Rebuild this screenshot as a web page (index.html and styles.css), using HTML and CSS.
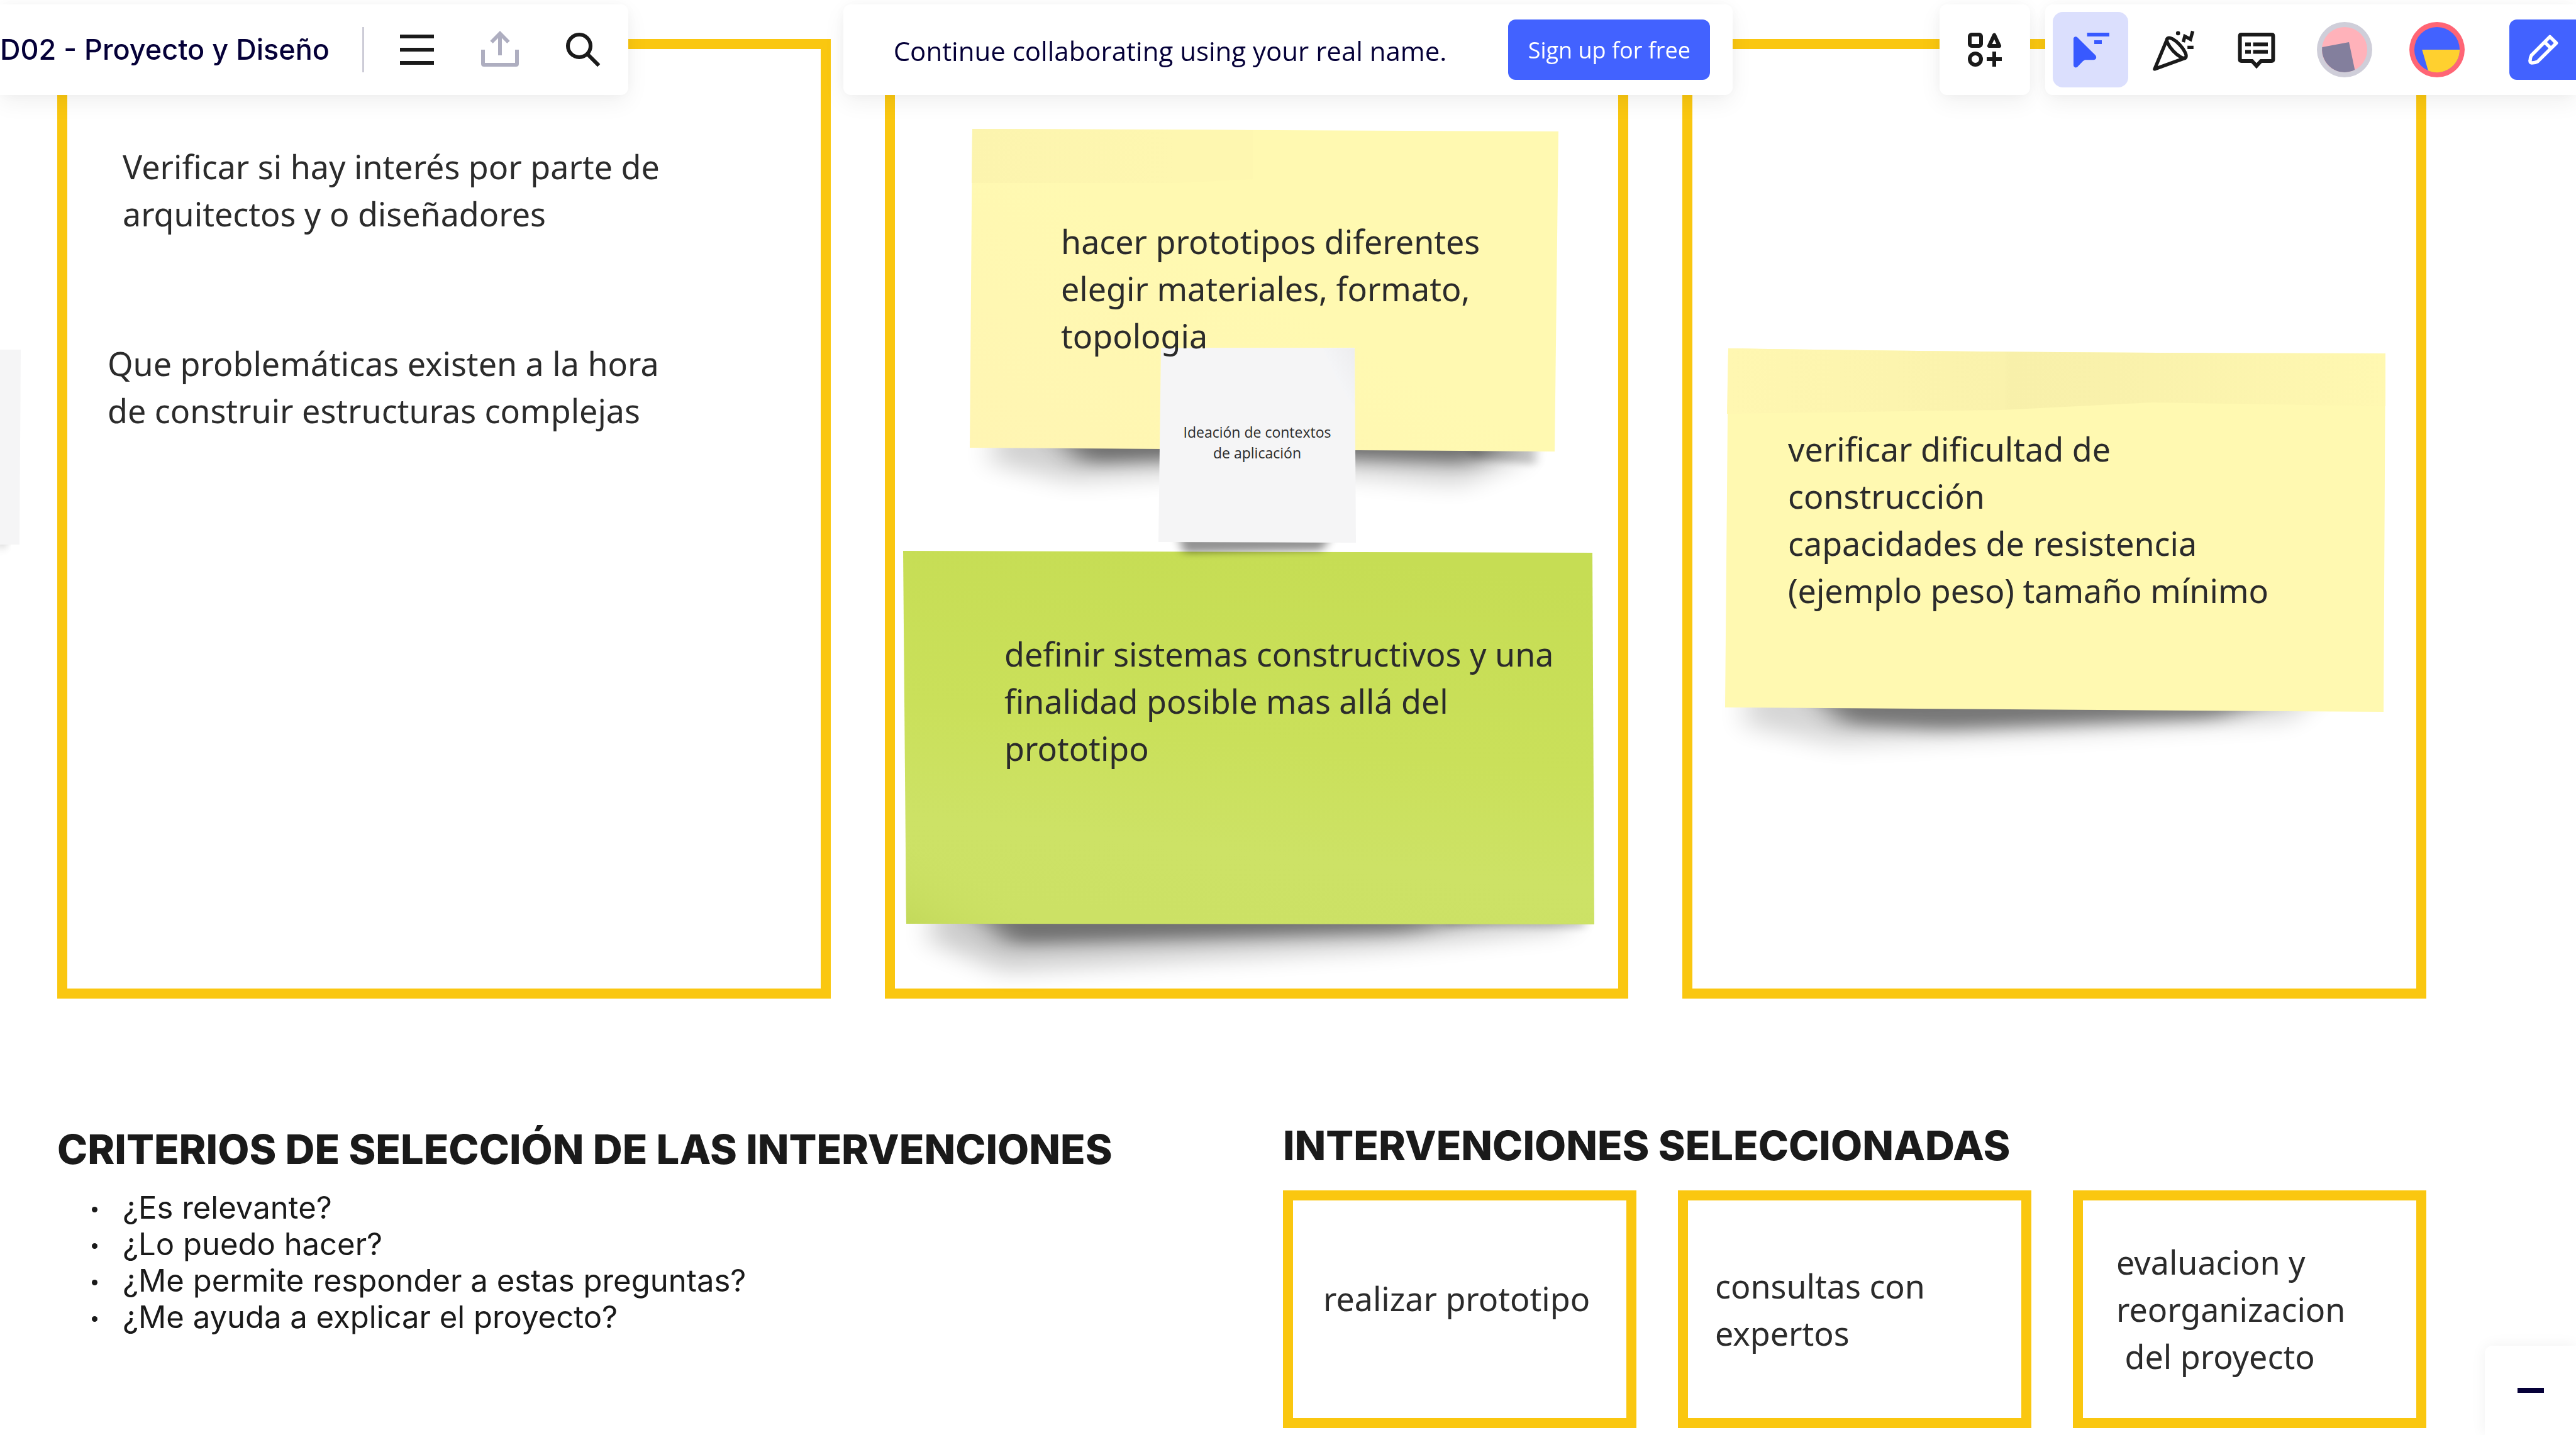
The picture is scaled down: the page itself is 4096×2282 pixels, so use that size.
FILE: index.html
```html
<!DOCTYPE html>
<html lang="es">
<head>
<meta charset="utf-8">
<title>D02 - Proyecto y Diseño</title>
<link rel="stylesheet" href="styles.css">
</head>
<body>
<header class="topbar">
  <nav class="panel panel-left" aria-label="Tablero">
    <span class="board-title">D02 - Proyecto y Diseño</span>
    <span class="divider"></span>
    <button class="tool" type="button" aria-label="Menú"><svg class="icon" viewBox="0 0 24 24"><path d="M3 4h18v2H3zM3 11h18v2H3zM3 18h18v2H3z" fill="#1a1a1a"/></svg></button>
    <button class="tool" type="button" aria-label="Exportar"><svg class="icon" viewBox="0 0 24 24" fill="none" stroke="#aeaec0" stroke-width="2"><path d="M3 12v7.500q0 .5 .5 .5h17q.5 0 .5-.5V12M12 15V3.500M7.500 8L12 3.400 16.500 8"/></svg></button>
    <button class="tool" type="button" aria-label="Buscar"><svg class="icon" viewBox="0 0 24 24" fill="none" stroke="#1a1a1a" stroke-width="2"><circle cx="10" cy="10" r="6"/><path d="M14.300 14.300L20.400 20.400"/></svg></button>
  </nav>
  <section class="panel panel-center" aria-label="Registro">
    <p class="invite">Continue collaborating using your real name.</p>
    <button class="signup" type="button">Sign up for free</button>
  </section>
  <div class="right-group">
    <div class="panel panel-apps">
      <button class="tool" type="button" aria-label="Aplicaciones"><svg class="icon" viewBox="0 0 24 24" fill="none" stroke="#1a1a1a" stroke-width="2"><rect x="4" y="4" width="6" height="6" rx="1"/><path d="M17 4.200L14.300 10h5.400z" stroke-linejoin="round"/><circle cx="7" cy="17" r="3"/><path d="M17 13v8M13 17h8"/></svg></button>
    </div>
    <div class="panel panel-right">
      <button class="tool tool-active" type="button" aria-label="Cursores"><svg class="icon" viewBox="0 0 24 24" fill="#3859ff"><path d="M3 6.200C3 5.100 4.200 4.700 5 5.400L14.600 14.900C15.500 15.900 15 17.400 13.600 17.400H9.700C9 17.400 8.500 17.600 8 18.100L5.200 21C4.400 21.900 3 21.500 3 20.200zM10.200 3H22v2H10.200zM14 7h4v2h-4z"/></svg></button>
      <button class="tool" type="button" aria-label="Reacciones"><svg class="icon" viewBox="0 0 24 24" fill="none" stroke="#1a1a1a" stroke-width="1.800"><path d="M8.800 6L2 22.300 18.500 16.300" stroke-linejoin="round"/><ellipse cx="13.600" cy="11.100" rx="7" ry="2.400" transform="rotate(47 13.600 11.100)"/><path d="M17.200 8l.8-3.100 3 1.600 1.200-4.300M19.400 10.800h3.200"/><circle cx="14.400" cy="3.300" r="1.100" fill="#1a1a1a" stroke="none"/></svg></button>
      <button class="tool" type="button" aria-label="Comentarios"><svg class="icon" viewBox="0 0 24 24" fill="none" stroke="#1a1a1a" stroke-width="2"><path d="M4 4h16q.8 0 .8 .8v12.400q0 .8-.8 .8h-5.600L12 20.600 9.600 18H4q-.8 0-.8-.8V4.800Q3.200 4 4 4z"/><path d="M6 9.200h3M10.200 9.200H18M6 13.200h3M10.200 13.200H18"/></svg></button>
      <div class="avatars">
        <button class="avatar" type="button" aria-label="Invitado"><svg viewBox="0 0 100 100"><circle cx="50" cy="50" r="50" fill="#cfced9"/><circle cx="50" cy="50" r="41" fill="#ffb2ba"/><path d="M9.500 45.500L58 36.500 68.500 86.500A41 41 0 0 1 9.500 45.500z" fill="#837f9d"/></svg></button>
        <button class="avatar" type="button" aria-label="Tú"><svg viewBox="0 0 100 100"><circle cx="50" cy="50" r="50" fill="#ff6575"/><circle cx="50" cy="50" r="41" fill="#4262ff"/><path d="M23 50H91A41 41 0 0 1 34 87.800z" fill="#ffd02f"/></svg></button>
      </div>
      <button class="share" type="button" aria-label="Compartir"><svg class="pencil" viewBox="0 0 16 16" fill="none" stroke="#fff" stroke-width="1.800" stroke-linejoin="round"><path d="M11.500 1.100L14.900 4.500 5 14.300Q3.800 15 1.800 15 .9 15 1 13.800 1 12.200 1.700 11z"/><path d="M8.700 4l3.300 3.200"/></svg></button>
    </div>
  </div>
</header>

<main class="board">
  <div class="frames">
    <section class="frame">
      <p class="text idea-a">Verificar si hay interés por parte de<br>arquitectos y o diseñadores</p>
      <p class="text idea-b">Que problemáticas existen a la hora<br>de construir estructuras complejas</p>
    </section>

    <section class="frame">
      <article class="note note-prototype">
        <svg class="paper" viewBox="0 0 936 513" aria-hidden="true">
          <defs>
            <linearGradient id="fold" x1="0" x2="1" y1="0" y2="0"><stop offset="0" stop-color="#fcf4ae"/><stop offset="1" stop-color="#fef7b0"/></linearGradient>
            <linearGradient id="warm" x1="0" x2="1" y1="1" y2="0"><stop offset="0" stop-color="#fff5b3"/><stop offset=".5" stop-color="#fff9b1"/></linearGradient>
            <filter id="soft" x="-20%" y="-80%" width="140%" height="260%"><feGaussianBlur stdDeviation="22 18"/></filter>
            <filter id="tight" x="-20%" y="-80%" width="140%" height="260%"><feGaussianBlur stdDeviation="24 12"/></filter>
            <filter id="edge" x="-20%" y="-80%" width="140%" height="260%"><feGaussianBlur stdDeviation="8 6"/></filter>
          </defs>
          <path d="M50 470H880V525L780 565 480 540 160 560 30 530z" fill="#000" opacity=".18" filter="url(#soft)"/>
          <path d="M130 480H860L800 532 480 520 180 532z" fill="#000" opacity=".46" filter="url(#tight)"/>
          <path d="M780 490H900V534L800 524z" fill="#000" opacity=".2" filter="url(#edge)"/>
          <path d="M4 0L936 4 930 513 0 507z" fill="url(#warm)"/>
          <path d="M4 0L330 1V86H3z" fill="url(#fold)"/>
          <path d="M330 1L450 2V80L330 86z" fill="#fef7b0"/>
        </svg>
        <p class="text">hacer prototipos diferentes<br>elegir materiales, formato,<br>topologia</p>
      </article>

      <article class="note note-systems">
        <svg class="paper" viewBox="0 0 1099 594" aria-hidden="true">
          <defs>
            <linearGradient id="lime" x1=".6" x2=".4" y1="0" y2="1"><stop offset="0" stop-color="#c6dd54"/><stop offset=".5" stop-color="#cae05a"/><stop offset=".8" stop-color="#cde266"/><stop offset="1" stop-color="#cce165"/></linearGradient>
            <linearGradient id="limeCorner" x1="0" x2=".6" y1="1" y2=".4"><stop offset="0" stop-color="#c3d95a"/><stop offset="1" stop-color="#cde266" stop-opacity="0"/></linearGradient>
          </defs>
          <path d="M60 540H1060V600L760 632 160 668 40 620z" fill="#000" opacity=".2" filter="url(#soft)"/>
          <path d="M100 560H1010L800 606 170 626z" fill="#000" opacity=".44" filter="url(#tight)"/>
          <path d="M860 570H1084V600L860 596z" fill="#000" opacity=".18" filter="url(#edge)"/>
          <path d="M0 0L1096 3 1099 594 5 593z" fill="url(#lime)"/>
          <path d="M4 460L220 593H5z" fill="url(#limeCorner)"/>
        </svg>
        <p class="text">definir sistemas constructivos y una<br>finalidad posible mas allá del<br>prototipo</p>
      </article>

      <article class="note note-context">
        <svg class="paper" viewBox="0 0 314 310" aria-hidden="true">
          <defs><linearGradient id="curl" x1="0" x2="1" y1="1" y2="0"><stop offset=".4" stop-color="#f5f6f8"/><stop offset="1" stop-color="#ededef"/></linearGradient></defs>
          <path d="M24 275H290L260 322 40 326z" fill="#000" opacity=".42" filter="url(#edge)"/>
          <path d="M4 0H312L314 310 0 309z" fill="#f5f5f6"/>
          <path d="M262 1H312V95Q285 60 262 1z" fill="url(#curl)"/>
        </svg>
        <p class="caption">Ideación de contextos<br>de aplicación</p>
      </article>
    </section>

    <section class="frame">
      <article class="note note-check">
        <svg class="paper" viewBox="0 0 1050 578" aria-hidden="true">
          <defs><linearGradient id="band"><stop offset="0" stop-color="#fff7b1"/><stop offset=".42" stop-color="#faf2ac"/><stop offset=".43" stop-color="#f8f0aa"/><stop offset=".58" stop-color="#f9f1ab"/><stop offset="1" stop-color="#fff8b1"/></linearGradient></defs>
          <path d="M40 530H960L900 590 560 610 180 630 30 600z" fill="#000" opacity=".16" filter="url(#soft)"/>
          <path d="M130 540H920L780 588 350 606 190 598z" fill="#000" opacity=".44" filter="url(#tight)"/>
          <path d="M5 0Q530 8 1050 8L1047 578 0 571z" fill="#fff9b1"/>
          <path d="M5 0Q530 8 1050 8V92L680 86 440 98 3 104z" fill="url(#band)"/>
        </svg>
        <p class="text">verificar dificultad de<br>construcción<br>capacidades de resistencia<br>(ejemplo peso) tamaño mínimo</p>
      </article>
    </section>
  </div>

  <div class="summary">
    <section class="criteria">
      <h2 class="heading">CRITERIOS DE SELECCIÓN DE LAS INTERVENCIONES</h2>
      <ul class="questions">
        <li>¿Es relevante?</li>
        <li>¿Lo puedo hacer?</li>
        <li>¿Me permite responder a estas preguntas?</li>
        <li>¿Me ayuda a explicar el proyecto?</li>
      </ul>
    </section>
    <section class="selected">
      <h2 class="heading">INTERVENCIONES SELECCIONADAS</h2>
      <div class="cards">
        <div class="card card-one"><p class="text">realizar prototipo</p></div>
        <div class="card card-two"><p class="text">consultas con<br>expertos</p></div>
        <div class="card card-three"><p class="text">evaluacion y<br>reorganizacion<br>&nbsp;del proyecto</p></div>
      </div>
    </section>
  </div>

  <svg class="loose-note" viewBox="0 0 60 350" aria-hidden="true">
    <path d="M0 290H14L0 322z" fill="#000" opacity=".4" filter="url(#edge)"/>
    <path d="M0 0H33L31 310H0z" fill="#f5f5f6"/>
  </svg>
</main>

<div class="zoombar">
  <button class="zoom-out" type="button" aria-label="Alejar"><svg class="minus" viewBox="0 0 42 8"><rect width="42" height="8" fill="#050038"/></svg></button>
</div>
</body>
</html>
```
FILE: styles.css
```css
* { box-sizing: border-box; margin: 0; padding: 0; }

body {
  background: #fff;
  color: #2b2b2b;
  font-family: "Open Sans", "Noto Sans", sans-serif;
  overflow: hidden;
}

button {
  border: 0;
  background: none;
  font: inherit;
  color: inherit;
  flex: none;
}

svg { display: block; }

/* Top bar */
.topbar {
  position: fixed;
  top: 7px;
  left: 0;
  right: 0;
  z-index: 10;
  display: grid;
  grid-template-columns: 1fr auto 1fr;
}

.panel {
  display: flex;
  align-items: center;
  height: 144px;
  background: #fff;
  border-radius: 12px;
  box-shadow: 0 0 24px rgba(0, 0, 0, .04), 0 12px 36px rgba(0, 0, 0, .06);
}

.panel-left {
  justify-self: start;
  gap: 12px;
  padding-right: 12px;
  border-radius: 0 12px 12px 0;
}

.board-title {
  color: #050038;
  font: 500 45px/72px "Inter", sans-serif;
  white-space: nowrap;
}

.divider {
  width: 3px;
  height: 72px;
  margin: 0 12px 0 40px;
  background: #cdccd7;
}

.tool {
  display: grid;
  place-items: center;
  width: 120px;
  height: 120px;
  border-radius: 16px;
}

.tool-active { background: #dbdffd; }
.icon { width: 72px; height: 72px; }

.panel-center { padding: 0 36px 0 80px; gap: 98px; }

.invite {
  padding-top: 4px;
  color: #050038;
  font-size: 42px;
  line-height: 72px;
  white-space: nowrap;
}

.signup {
  width: 321px;
  height: 96px;
  padding-top: 2px;
  border-radius: 12px;
  background: #4262ff;
  color: #fff;
  font-size: 36px;
  line-height: 48px;
  white-space: nowrap;
}

.right-group { display: flex; justify-content: flex-end; gap: 24px; }
.panel-apps { padding: 0 12px; }
.panel-right { gap: 12px; padding-left: 12px; border-radius: 12px 0 0 12px; }
.avatars { display: flex; gap: 59px; margin: 0 59px 0 24px; }
.avatar { width: 88px; height: 88px; border-radius: 50%; }

.share {
  width: 106px;
  height: 96px;
  padding-left: 30px;
  border-radius: 12px 0 0 12px;
  background: #4262ff;
}

.pencil { width: 48px; height: 48px; }

/* Board */
.board { position: relative; padding: 62px 238px 11px 91px; }

.frames {
  display: grid;
  grid-template-columns: 1230fr 1182fr 1183fr;
  gap: 86px;
}

.frame {
  position: relative;
  min-height: 1526px;
  border: 16px solid #fac710;
}

.text {
  position: relative;
  z-index: 2;
  font-family: "Noto Sans", "Open Sans", sans-serif;
  font-size: 52px;
  line-height: 75px;
  white-space: nowrap;
}

.idea-a { margin: 149px 0 0 88px; }
.idea-b { margin: 163px 0 0 64px; }

/* Sticky notes */
.note { position: relative; }

.paper {
  position: absolute;
  inset: 0;
  width: 100%;
  height: 100%;
  overflow: visible;
}

.note-prototype {
  width: 936px;
  height: 513px;
  margin: 127px 0 0 119px;
  padding: 141px 0 0 145px;
}

.note-systems {
  width: 1099px;
  height: 594px;
  margin: 158px 0 0 13px;
  padding: 126px 0 0 161px;
}

.note-context {
  position: absolute;
  z-index: 1;
  left: 419px;
  top: 475px;
  width: 314px;
  height: 310px;
  padding-top: 118px;
}

.note-check {
  width: 1050px;
  height: 578px;
  margin: 476px 0 0 52px;
  padding: 122px 0 0 100px;
}

.caption {
  position: relative;
  font-size: 23px;
  line-height: 33px;
  text-align: center;
}

.loose-note {
  position: absolute;
  left: 0;
  top: 556px;
  width: 60px;
  height: 350px;
}

/* Summary */
.summary {
  display: grid;
  grid-template-columns: 1949fr 1818fr;
  margin-top: 194px;
}

.criteria { padding-top: 6px; }

.heading {
  color: #1a1a1a;
  font: 800 65px/80px "Inter", sans-serif;
  white-space: nowrap;
}

.questions {
  margin-top: 24px;
  padding-left: 104px;
  list-style: none;
  color: #1a1a1a;
  font: 400 49px/58px "Inter", sans-serif;
}

.questions li { position: relative; }

.questions li::before {
  content: "";
  position: absolute;
  left: -49px;
  top: 27px;
  width: 9px;
  height: 9px;
  border-radius: 50%;
  background: #1a1a1a;
}

.cards {
  display: grid;
  grid-template-columns: repeat(3, 1fr);
  gap: 66px;
  margin-top: 31px;
}

.card { height: 378px; border: 16px solid #fac710; }
.card-one { padding: 118px 0 0 48px; }
.card-two { padding: 98px 0 0 43px; }
.card-three { padding: 60px 0 0 53px; }

/* Zoom control */
.zoombar {
  position: fixed;
  right: 0;
  bottom: 0;
  z-index: 10;
  width: 145px;
  height: 142px;
  border-radius: 12px 0 0 0;
  background: #fff;
  box-shadow: 0 0 24px rgba(0, 0, 0, .06);
}

.zoom-out {
  display: grid;
  place-items: center;
  width: 100%;
  height: 100%;
}

.minus { width: 42px; height: 8px; }
```
